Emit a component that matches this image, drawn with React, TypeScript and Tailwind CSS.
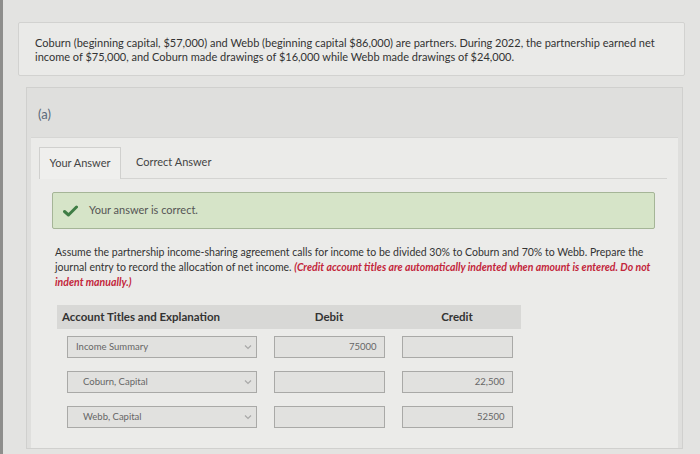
import React from 'react'

const rows = [
  { title: 'Income Summary', indent: false, debit: '75000', credit: '' },
  { title: 'Coburn, Capital', indent: true, debit: '', credit: '22,500' },
  { title: 'Webb, Capital', indent: true, debit: '', credit: '52500' },
]

const Chevron = () => (
  <svg width="8" height="6" viewBox="0 0 8 6" className="shrink-0">
    <path d="M1 1.5 L4 4.5 L7 1.5" fill="none" stroke="#a8a8a8" strokeWidth="1.2" />
  </svg>
)

const App = () => {
  return (
    <div
      className="w-[700px] h-[454px] overflow-hidden bg-[#e3e3e1] border-l-[3px] border-[#8e8e8c] pt-[22px] pl-[15px] text-[#333]"
      style={{ fontFamily: 'Lato, "Open Sans", sans-serif' }}
    >
      {/* problem statement */}
      <div className="w-[667px] h-[54px] border border-[#d2d2d0] bg-[#eaeae8] rounded-[2px] pl-[16px] pt-[13px] text-[11px] leading-[14px]">
        Coburn (beginning capital, $57,000) and Webb (beginning capital $86,000) are partners. During 2022, the partnership earned net income of $75,000, and Coburn made drawings of $16,000 while Webb made drawings of $24,000.
      </div>

      {/* part (a) */}
      <div className="mt-[11px] ml-[8px] w-[657px] h-[362px] border border-[#d0d0ce] bg-[#dfdfdd]">
        <div className="h-[49px] pl-[11px] pt-[17px] text-[13px] text-[#5a6878]">(a)</div>

        <div className="mx-[4px] h-[311px] bg-[#ebebe9] border-t border-[#d6d6d4] pl-[8px] pt-[9px]">
          {/* tabs */}
          <div className="flex items-end h-[32px] mr-[11px] border-b border-[#d4d4d2]">
            <div className="w-[82px] h-[32px] border border-b-0 border-[#d0d0ce] bg-[#efefed] flex items-center justify-center text-[11px] text-[#444] -mb-px">
              Your Answer
            </div>
            <div className="pl-[15px] h-[32px] flex items-center text-[11px] text-[#444]">Correct Answer</div>
          </div>

          <div className="pl-[13px]">
            {/* correct banner */}
            <div className="mt-[13px] w-[603px] h-[37px] border border-[#a5b597] bg-[#d6e4c8] rounded-[2px] flex items-center pl-[10px]">
              <svg width="15" height="12" viewBox="0 0 15 12">
                <path d="M1.5 6.5 L5.5 10 L13.5 2" fill="none" stroke="#3f7d45" strokeWidth="3" strokeLinecap="round" strokeLinejoin="round" />
              </svg>
              <span className="ml-[11px] text-[11px] text-[#555]">Your answer is correct.</span>
            </div>

            {/* instructions */}
            <p className="mt-[16px] ml-[3px] w-[600px] text-[10.5px] leading-[15px] text-[#333]">
              Assume the partnership income-sharing agreement calls for income to be divided 30% to Coburn and 70% to Webb. Prepare the journal entry to record the allocation of net income.{' '}
              <span className="italic font-bold text-[#c3263b]">
                (Credit account titles are automatically indented when amount is entered. Do not indent manually.)
              </span>
            </p>

            {/* journal table */}
            <div className="mt-[15px] ml-[5px] w-[464px]">
              <div className="grid grid-cols-[208px_128px_128px] h-[24px] bg-[#d8d8d6] items-center text-[11.5px] font-bold text-[#333]">
                <div className="pl-[5px]">Account Titles and Explanation</div>
                <div className="text-center">Debit</div>
                <div className="text-center">Credit</div>
              </div>

              <div className="flex flex-col gap-[13px] pt-[7px]">
                {rows.map((r) => (
                  <div key={r.title} className="grid grid-cols-[208px_128px_128px] items-center">
                    <div className="ml-[10px] w-[190px] h-[22px] border border-[#a9a9a7] bg-[#e1e1df] flex items-center justify-between pr-[4px]">
                      <span className={`${r.indent ? 'pl-[15px]' : 'pl-[8px]'} text-[9.5px] text-[#666]`}>{r.title}</span>
                      <Chevron />
                    </div>
                    <div className="flex justify-center">
                      <div className="w-[111px] h-[22px] border border-[#a9a9a7] bg-[#e1e1df] flex items-center justify-end pr-[7px] text-[9.5px] text-[#666]">
                        {r.debit}
                      </div>
                    </div>
                    <div className="flex justify-center">
                      <div className="w-[111px] h-[22px] border border-[#a9a9a7] bg-[#e1e1df] flex items-center justify-end pr-[7px] text-[9.5px] text-[#666]">
                        {r.credit}
                      </div>
                    </div>
                  </div>
                ))}
              </div>
            </div>
          </div>
        </div>
      </div>
    </div>
  )
}

export default App
